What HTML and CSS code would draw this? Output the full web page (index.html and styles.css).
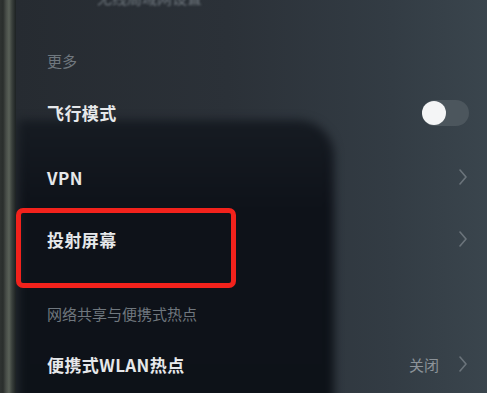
FILE: index.html
```html
<!DOCTYPE html>
<html lang="zh">
<head>
<meta charset="utf-8">
<link rel="stylesheet" href="styles.css">
</head>
<body>
<div class="screen">
  <div class="bezel"></div>
  <div class="content">
    <div class="glare"></div>
    <div class="row partial"><span class="sub-text dim">无线局域网设置</span></div>
    <div class="row head head-more"><span class="sub-text">更多</span></div>
    <div class="row item item-air">
      <span class="label">飞行模式</span>
      <span class="toggle"><span class="knob"></span></span>
    </div>
    <div class="row item item-vpn">
      <span class="label">VPN</span>
      <svg class="chev" viewBox="0 0 8 16" width="8" height="16"><polyline points="1,1 7,8 1,15" fill="none" stroke="currentColor" stroke-width="1.6" stroke-linecap="round" stroke-linejoin="round"/></svg>
    </div>
    <div class="row item item-cast">
      <span class="label">投射屏幕</span>
      <svg class="chev" viewBox="0 0 8 16" width="8" height="16"><polyline points="1,1 7,8 1,15" fill="none" stroke="currentColor" stroke-width="1.6" stroke-linecap="round" stroke-linejoin="round"/></svg>
      <div class="highlight"></div>
    </div>
    <div class="row head head-share"><span class="sub-text">网络共享与便携式热点</span></div>
    <div class="row item item-wlan">
      <span class="label">便携式WLAN热点</span>
      <span class="value">关闭</span>
      <svg class="chev" viewBox="0 0 8 16" width="8" height="16"><polyline points="1,1 7,8 1,15" fill="none" stroke="currentColor" stroke-width="1.6" stroke-linecap="round" stroke-linejoin="round"/></svg>
    </div>
  </div>
</div>
</body>
</html>
```
FILE: styles.css
```css
html, body {
  margin: 0;
  padding: 0;
  width: 487px;
  height: 393px;
  overflow: hidden;
  background: #20252b;
  font-family: "Noto Sans CJK SC", "Noto Sans", sans-serif;
}

.screen {
  display: flex;
  width: 487px;
  height: 393px;
  overflow: hidden;
}

.bezel {
  flex: 0 0 16px;
  background: linear-gradient(90deg, #2f3331 0px, #2a2e2c 3px, #474c47 6px, #5a6158 9px, #3a403c 12px, #1c2122 16px);
}

.content {
  position: relative;
  flex: 1;
  display: flex;
  flex-direction: column;
  padding: 0 20px 0 31px;
  background: linear-gradient(90deg, #262b31 0%, #2b3138 45%, #333c44 80%, #3a454d 100%);
  overflow: hidden;
}

.glare {
  position: absolute;
  left: 2px;
  top: 120px;
  width: 316px;
  height: 300px;
  border-top-right-radius: 36px;
  background: linear-gradient(180deg, #161b22 0%, #0e1219 30%, #0d1218 100%);
  filter: blur(5px);
}

.row {
  position: relative;
  display: flex;
  align-items: center;
  z-index: 1;
}

.partial {
  height: 24px;
  margin-top: -15px;
  padding-left: 50px;
}

.dim {
  color: #9aa1a8;
  filter: blur(1px);
}

.head-more {
  height: 40px;
  margin-top: 31px;
}

.head-share {
  height: 44px;
  margin-top: 22px;
}

.sub-text {
  font-size: 15px;
  color: #6f777e;
}

.item {
  justify-content: space-between;
  gap: 10px;
}

.item-air { height: 65px; }
.item-vpn { height: 64px; }
.item-cast { height: 60px; }
.item-wlan { height: 58px; }

.label {
  flex: 1;
  font-size: 17px;
  font-weight: 700;
  color: #e6e8ea;
  letter-spacing: 0.4px;
}

.value {
  font-size: 15px;
  color: #8c9399;
  margin-right: 10px;
}

.chev {
  color: #6b747b;
}

.toggle {
  position: relative;
  width: 47px;
  height: 26px;
  border-radius: 13px;
  background: #4c565d;
  display: flex;
  align-items: center;
  margin-right: -2px;
}

.knob {
  width: 24px;
  height: 24px;
  border-radius: 50%;
  background: #f4f5f6;
}

.highlight {
  position: absolute;
  left: -31px;
  top: -1px;
  width: 220px;
  height: 80px;
  box-sizing: border-box;
  border: 5px solid #f2221c;
  border-radius: 7px;
}
```
